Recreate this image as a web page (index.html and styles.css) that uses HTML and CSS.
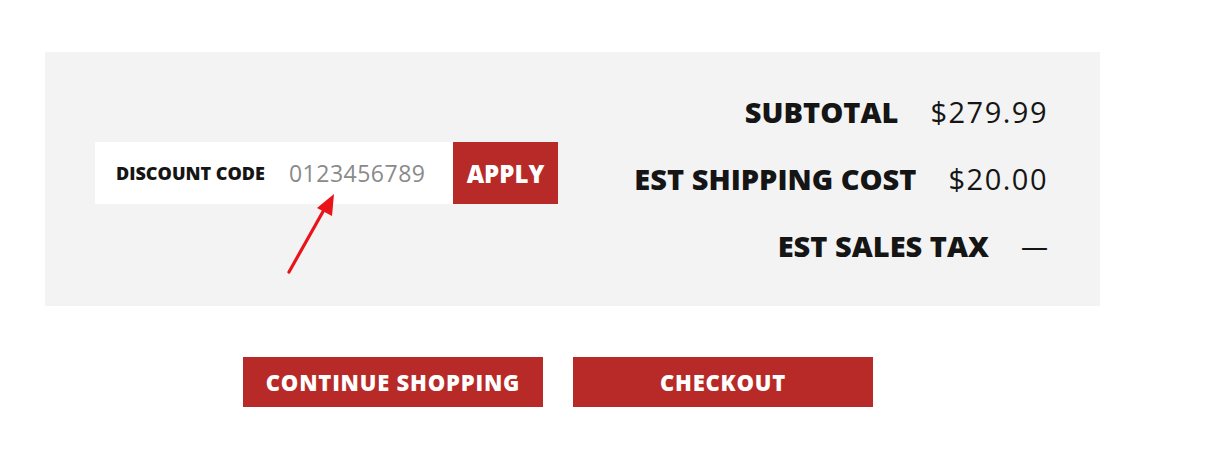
FILE: index.html
```html
<!DOCTYPE html>
<html>
<head>
<meta charset="utf-8">
<link rel="stylesheet" href="styles.css">
</head>
<body>
<div class="page">
  <section class="panel">
    <div class="discount">
      <div class="discount-field">
        <span class="discount-label">DISCOUNT CODE</span>
        <span class="discount-input">0123456789</span>
      </div>
      <button class="apply">APPLY</button>
      <svg class="arrow" width="60" height="90" viewBox="0 0 60 90">
        <line x1="4" y1="84" x2="40" y2="20" stroke="#e8141a" stroke-width="3.2" stroke-linecap="round"/>
        <polygon points="49,6 47,28 32,20" fill="#e8141a"/>
      </svg>
    </div>
    <div class="summary">
      <div class="row"><span class="label">SUBTOTAL</span><span class="value">$279.99</span></div>
      <div class="row"><span class="label">EST SHIPPING COST</span><span class="value">$20.00</span></div>
      <div class="row"><span class="label">EST SALES TAX</span><span class="value dash">—</span></div>
    </div>
  </section>
  <div class="actions">
    <button class="btn">CONTINUE SHOPPING</button>
    <button class="btn">CHECKOUT</button>
  </div>
</div>
</body>
</html>
```
FILE: styles.css
```css
* { box-sizing: border-box; }
body {
  margin: 0;
  background: #fff;
  font-family: "Open Sans", "DejaVu Sans", sans-serif;
  color: #111;
}
.page { padding-top: 52px; padding-left: 45px; }
.panel {
  width: 1055px;
  height: 254px;
  background: #f3f3f3;
  display: flex;
  justify-content: space-between;
  align-items: flex-start;
  padding: 0 52px 0 50px;
}
.discount {
  position: relative;
  display: flex;
  margin-top: 90px;
  height: 62px;
}
.discount-field {
  width: 358px;
  background: #fff;
  display: flex;
  align-items: center;
  padding-left: 21px;
}
.discount-label {
  font-weight: 800;
  font-size: 18px;
  color: #151515;
  margin-right: 24px;
}
.discount-input {
  font-size: 23px;
  color: #8a8a8a;
  letter-spacing: 0.5px;
}
.apply {
  width: 105px;
  border: none;
  background: #b72a27;
  color: #fff;
  font-family: inherit;
  font-weight: 800;
  font-size: 24px;
  padding: 0;
}
.arrow {
  position: absolute;
  left: 190px;
  top: 46px;
}
.summary {
  padding-top: 26px;
  display: flex;
  flex-direction: column;
  align-items: flex-end;
}
.row {
  height: 67px;
  flex-shrink: 0;
  display: flex;
  align-items: center;
  gap: 32px;
}
.label {
  font-weight: 800;
  font-size: 29px;
  color: #151515;
}
.value {
  font-size: 29px;
  letter-spacing: 1.5px;
  color: #151515;
}
.value.dash {
  font-size: 27px;
  letter-spacing: 0;
}
.actions {
  display: flex;
  gap: 30px;
  padding-left: 198px;
  margin-top: 51px;
}
.btn {
  width: 300px;
  height: 50px;
  border: none;
  background: #b72a27;
  color: #fff;
  font-family: inherit;
  font-weight: 800;
  font-size: 22px;
  letter-spacing: 0.8px;
  padding: 0;
}
```
